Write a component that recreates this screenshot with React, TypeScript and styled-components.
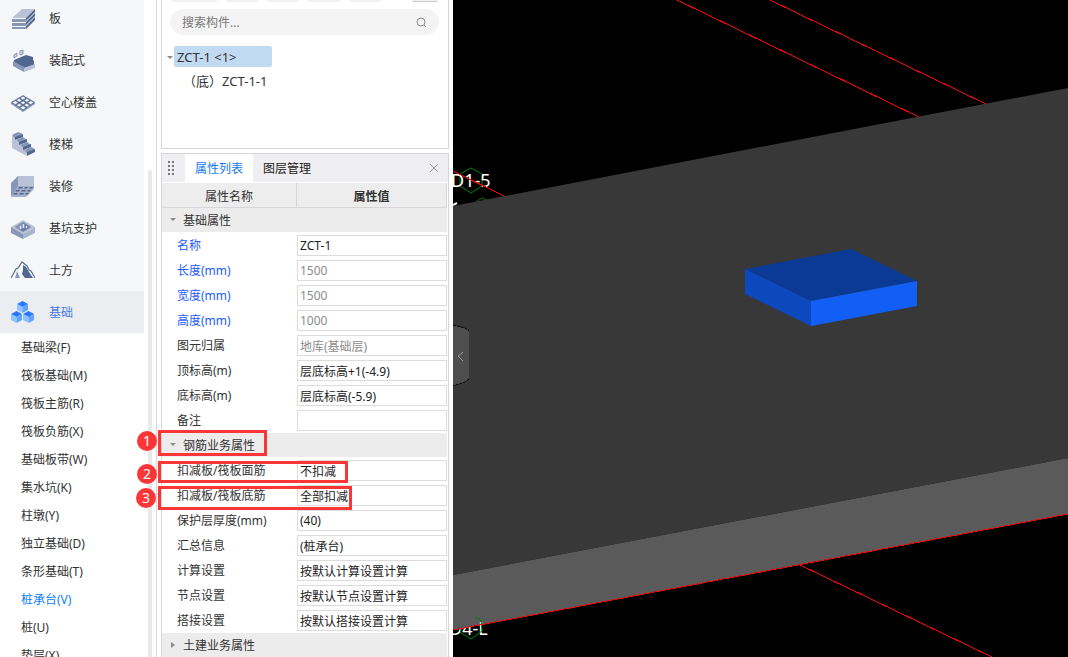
import React from "react";
import styled, { createGlobalStyle, css } from "styled-components";

const GlobalStyle = createGlobalStyle`
  *, *::before, *::after { box-sizing: border-box; }
  html, body, #root { height: 100%; }
  body {
    margin: 0;
    overflow: hidden;
    background: #fff;
    color: #333;
    font: 12px/20px "Noto Sans", "Noto Sans CJK SC", sans-serif;
  }
  button, input { font: inherit; color: inherit; }
  button { border: 0; padding: 0; background: none; cursor: pointer; }
`;

const Page = styled.div`
  display: flex;
  height: 100vh;
  overflow: hidden;
`;

/* Module navigation */

const Sidebar = styled.nav`
  flex: 0 0 144px;
  margin-top: -3px;
  background: #f5f7f9;
`;

const ModuleButton = styled.button<{ $active?: boolean }>`
  display: flex;
  align-items: center;
  gap: 14px;
  width: 100%;
  height: 42px;
  padding-left: 11px;
  background: ${(p) => (p.$active ? "#ebedf1" : "transparent")};
  color: ${(p) => (p.$active ? "#4a7bdf" : "#333")};
`;

const ModuleLabel = styled.span`
  padding-top: 2px;
`;

const SubList = styled.div`
  padding-top: 1px;
  background: #fff;
`;

const SubButton = styled.button<{ $active?: boolean }>`
  display: block;
  width: 100%;
  height: 28px;
  padding-left: 21px;
  text-align: left;
  color: ${(p) => (p.$active ? "#0a80ff" : "#333")};
`;

const Gutter = styled.div`
  flex: 0 0 13px;
  padding: 170px 0 0 4px;
  border-right: 1px solid #d9d9dc;
`;

const ScrollThumb = styled.div`
  width: 4px;
  height: 100%;
  border-radius: 2px 2px 0 0;
  background: #e9e9e9;
`;

/* Component list and properties */

const Inspector = styled.main`
  display: flex;
  flex: 0 0 296px;
  flex-direction: column;
  gap: 4px;
  padding: 0 4px;
`;

const TreePanel = styled.section`
  flex: 0 0 149px;
  border: solid #d6d6d8;
  border-width: 0 1px 1px;
`;

const Toolbar = styled.div`
  display: flex;
  gap: 9px;
  height: 2px;
  padding: 0 10px;
`;

const ToolButton = styled.button<{ $width: number; $last?: boolean }>`
  width: ${(p) => p.$width}px;
  height: 2px;
  border-radius: 0 0 3px 3px;
  background: #f1f1f1;
  ${(p) =>
    p.$last &&
    css`
      margin-left: auto;
      border-bottom: 1px solid #ccc;
    `}
`;

const SearchBox = styled.label`
  display: flex;
  align-items: center;
  height: 26px;
  margin: 7px 9px 0 8px;
  padding: 0 12px;
  border-radius: 13px;
  background: #f4f4f4;
`;

const SearchInput = styled.input`
  flex: 1;
  min-width: 0;
  padding: 2px 0 0;
  border: 0;
  outline: 0;
  background: transparent;
  &::placeholder { color: #777; opacity: 1; }
`;

const Tree = styled.div`
  display: flex;
  flex-direction: column;
  align-items: flex-start;
  padding: 11px 0 0 5px;
  font-size: 13px;
`;

const TreeRow = styled.div`
  display: flex;
  align-items: center;
`;

const TreeToggle = styled.button`
  display: flex;
  width: 7px;
`;

const TreeItem = styled.button<{ $selected?: boolean }>`
  height: 21px;
  text-align: left;
  ${(p) =>
    p.$selected
      ? css`
          width: 98px;
          padding-left: 3px;
          border-radius: 2px;
          background: #c2d9f2;
        `
      : css`
          margin: 3px 0 0 16px;
        `}
`;

const PropertyPanel = styled.section`
  position: relative;
  flex: 1;
  min-height: 0;
  border: solid #d6d6d8;
  border-width: 1px 1px 0;
`;

const TabBar = styled.div`
  display: flex;
  height: 29px;
  border-bottom: 1px solid #fff;
  background: #efeff1;
`;

const Grip = styled.span`
  display: flex;
  align-items: center;
  width: 23px;
  padding-left: 5px;
`;

const Tab = styled.button<{ $active?: boolean }>`
  width: 68px;
  padding-top: 2px;
  background: ${(p) => (p.$active ? "#fff" : "transparent")};
  color: ${(p) => (p.$active ? "#1478f0" : "#222")};
`;

const CloseButton = styled.button`
  display: flex;
  align-items: center;
  margin-left: auto;
  padding-right: 9px;
`;

const PropertyTable = styled.table`
  width: calc(100% - 1px);
  border-collapse: separate;
  border-spacing: 0;
  table-layout: fixed;
  text-align: left;
`;

const HeadCell = styled.th<{ $bold?: boolean }>`
  height: 25px;
  padding: 3px 0 0;
  border: solid #d6d6d8;
  border-width: 0 1px 1px 0;
  background: #ededed;
  text-align: center;
  font-weight: ${(p) => (p.$bold ? 700 : 400)};
`;

const NameHeadCell = styled(HeadCell)`
  width: 135px;
`;

const SectionCell = styled.th`
  height: 25px;
  padding: 2px 0 0;
  border-bottom: 1px solid #fff;
  background: #ececec;
  font-weight: 400;
`;

const SectionButton = styled.button`
  display: flex;
  align-items: center;
  gap: 6px;
  padding-left: 8px;
`;

const NameCell = styled.th<{ $blue?: boolean }>`
  height: 25px;
  padding: 0 0 0 15px;
  font-weight: 400;
  white-space: nowrap;
  color: ${(p) => (p.$blue ? "#1a5cff" : "#333")};
`;

const ValueCell = styled.td`
  height: 25px;
  padding: 0;
`;

const ValueInput = styled.input<{ $muted?: boolean }>`
  display: block;
  width: 100%;
  height: 21px;
  padding: 0 2px;
  border: 1px solid #dcdcdc;
  outline: 0;
  background: #fff;
  color: ${(p) => (p.$muted ? "#8c8c8c" : "#222")};
`;

/* Numbered callouts laid over the property rows */

const Callout = styled.div<{ $top: number; $left: number; $width: number; $height: number }>`
  position: absolute;
  top: ${(p) => p.$top}px;
  left: ${(p) => p.$left}px;
  width: ${(p) => p.$width}px;
  height: ${(p) => p.$height}px;
  border: 3px solid #fb3636;
  pointer-events: none;
`;

const Badge = styled.span<{ $top: number; $left: number }>`
  position: absolute;
  top: ${(p) => p.$top}px;
  left: ${(p) => p.$left}px;
  width: 20px;
  height: 20px;
  border-radius: 50%;
  background: #fb3636;
  color: #fff;
  font-size: 14px;
  text-align: center;
`;

/* Model view */

const Viewport = styled.section`
  position: relative;
  flex: 1;
  min-width: 0;
  background: #000;
`;

const Scene = styled.svg`
  display: block;
  width: 100%;
  height: 100%;
`;

const CollapseButton = styled.button`
  position: absolute;
  top: 324px;
  left: 0;
  display: flex;
  width: 17px;
  height: 63px;
`;

const Icon = ({ children }: { children: React.ReactNode }) => (
  <svg width="24" height="24" viewBox="0 0 24 24" aria-hidden="true">{children}</svg>
);

const icons = {
  slab: (
    <Icon>
      <path d="M1 12 11 3H24L15 12Z" fill="#b9c2d6" />
      <path d="M1 13H15V16H1ZM1 17H15V20H1ZM1 21H15V23H1Z" fill="#8797b8" />
      <path d="M15 12 24 3V6L15 15ZM15 16 24 7V10L15 19ZM15 20 24 11V14L15 23Z" fill="#52678f" />
    </Icon>
  ),
  prefab: (
    <Icon>
      <path d="M3 7 6 5V8L3 10ZM9 3 12 2V6L9 7Z" fill="#c9d0df" stroke="#8797b8" />
      <path d="M3 12 15 7 22 9V12L23 13V17L13 20 3 16Z" fill="#52678f" />
      <path d="M2 13 13 19V24L2 18Z" fill="#8797b8" />
      <path d="M13 20 24 16V20L13 24Z" fill="#b9c2d6" />
    </Icon>
  ),
  hollow: (
    <Icon>
      <path d="M0 12 12 5 24 12V14L12 22 0 14Z" fill="#8797b8" />
      <path d="M1 12.500 12 6 23 12.500 12 20Z" fill="#f5f7f9" stroke="#60739a" />
      <path d="M4.700 10.300 15.700 17.500M8.300 8.200 19.300 15M15.700 8.200 4.700 15M19.300 10.300 8.300 17.500" stroke="#60739a" strokeWidth="1.500" />
    </Icon>
  ),
  stair: (
    <Icon>
      <path d="M1 3 4 5V8L9 10V13L14 15V18L16 20V24L1 16Z" fill="#b9c2d6" />
      <path d="M1 3 7 0 12 2 4 6ZM5 8 12 5 16 8 9 11ZM9 13 16 10 20 13 13 16ZM13 18 20 15 24 17 16 21Z" fill="#8797b8" />
      <path d="M4 5 12 2V5L4 8ZM8 10 16 7V10L8 13ZM12 15 20 12V15L12 18ZM16 20 24 17V20L16 24Z" fill="#52678f" />
    </Icon>
  ),
  finish: (
    <Icon>
      <path d="M0 9 7 2V13L0 23Z" fill="#8797b8" />
      <path d="M7 2H23V12H7Z" fill="#b9c2d6" />
      <path d="M7 12H23V15L15 23H0Z" fill="#a4b0ca" />
      <path d="M8 13H12L11 14.500H7ZM14 13H17L16 14.500H13ZM19 13H22L21 14.500H18ZM5 16H9L8 17.500H4ZM11 16H15L14 17.500H10ZM17 16H20L19 17.500H16ZM3 19H7L6 20.500H2ZM9 19H13L12 20.500H8ZM15 19H18L17 20.500H14Z" fill="#52678f" />
    </Icon>
  ),
  pit: (
    <Icon>
      <path d="M0 11 12 4 24 11 12 18Z" fill="#b9c2d6" />
      <path d="M4 11 12 6 20 11 12 16Z" fill="#6d7fa5" />
      <path d="M4 11 12 6V12L8 14Z" fill="#8797b8" />
      <path d="M9.500 10V13M12.500 8V12M15.500 10V12" stroke="#dfe4ed" strokeWidth="1.500" />
      <path d="M0 11 12 18V23L0 17Z" fill="#8797b8" />
      <path d="M12 18 24 11V17L12 23Z" fill="#a9b5cd" />
    </Icon>
  ),
  earth: (
    <Icon>
      <path d="M0 20 5 11 7 10 11 4 16 8 18 12 20 13 24 20" fill="none" stroke="#60739a" strokeWidth="1.3" />
      <path d="M11 5 13 12 16 15 18 20H9L11 14 9 11Z" fill="#f5f7f9" />
      <path d="M12 7 15 9 18 14 22 20H14L11 16 12 12Z" fill="#52678f" />
      <path d="M6 13 9 20H4L5 17Z" fill="#8797b8" />
    </Icon>
  ),
  foundation: (
    <Icon>
      {[[6, 1], [0, 11], [12, 11]].map(([x, y]) => (
        <g key={x} transform={`translate(${x} ${y})`}>
          <path d="M0 3 5.500 0 11 3 5.500 6Z" fill="#2878ff" />
          <path d="M0 3 5.500 6V12L0 9Z" fill="#8fc2ff" />
          <path d="M5.500 6 11 3V9L5.500 12Z" fill="#5ea3ff" />
        </g>
      ))}
    </Icon>
  ),
};

const modules: { label: string; icon: React.ReactNode; active?: boolean }[] = [
  { label: "板", icon: icons.slab },
  { label: "装配式", icon: icons.prefab },
  { label: "空心楼盖", icon: icons.hollow },
  { label: "楼梯", icon: icons.stair },
  { label: "装修", icon: icons.finish },
  { label: "基坑支护", icon: icons.pit },
  { label: "土方", icon: icons.earth },
  { label: "基础", icon: icons.foundation, active: true },
];

const subItems = [
  "基础梁(F)", "筏板基础(M)", "筏板主筋(R)", "筏板负筋(X)", "基础板带(W)", "集水坑(K)",
  "柱墩(Y)", "独立基础(D)", "条形基础(T)", "桩承台(V)", "桩(U)", "垫层(X)",
];

type Property = { name: string; value: string; blue?: boolean; muted?: boolean };

const basicProps: Property[] = [
  { name: "名称", value: "ZCT-1", blue: true },
  { name: "长度(mm)", value: "1500", blue: true, muted: true },
  { name: "宽度(mm)", value: "1500", blue: true, muted: true },
  { name: "高度(mm)", value: "1000", blue: true, muted: true },
  { name: "图元归属", value: "地库(基础层)", muted: true },
  { name: "顶标高(m)", value: "层底标高+1(-4.9)" },
  { name: "底标高(m)", value: "层底标高(-5.9)" },
  { name: "备注", value: "" },
];

const rebarProps: Property[] = [
  { name: "扣减板/筏板面筋", value: "不扣减" },
  { name: "扣减板/筏板底筋", value: "全部扣减" },
  { name: "保护层厚度(mm)", value: "(40)" },
  { name: "汇总信息", value: "(桩承台)" },
  { name: "计算设置", value: "按默认计算设置计算" },
  { name: "节点设置", value: "按默认节点设置计算" },
  { name: "搭接设置", value: "按默认搭接设置计算" },
];

const Section = ({ title, open }: { title: string; open?: boolean }) => (
  <tr>
    <SectionCell colSpan={2} scope="colgroup">
      <SectionButton aria-expanded={!!open}>
        <svg width="7" height="10" viewBox="0 0 7 10" aria-hidden="true">
          <path d={open ? "M0 2H6L3 5Z" : "M1 1 5 4 1 7Z"} fill="#8a8a8a" />
        </svg>
        {title}
      </SectionButton>
    </SectionCell>
  </tr>
);

const PropertyRow = ({ name, value, blue, muted }: Property) => (
  <tr>
    <NameCell scope="row" $blue={blue}>
      <label htmlFor={name}>{name}</label>
    </NameCell>
    <ValueCell>
      <ValueInput id={name} defaultValue={value} $muted={muted} />
    </ValueCell>
  </tr>
);

const AxisText = styled.text`
  font: 18px "Noto Sans", sans-serif;
  fill: #fff;
`;

export default function App() {
  return (
    <>
      <GlobalStyle />
      <Page>
        <Sidebar>
          {modules.map((m) => (
            <ModuleButton key={m.label} $active={m.active}>
              {m.icon}
              <ModuleLabel>{m.label}</ModuleLabel>
            </ModuleButton>
          ))}
          <SubList>
            {subItems.map((s) => (
              <SubButton key={s} $active={s === "桩承台(V)"}>{s}</SubButton>
            ))}
          </SubList>
        </Sidebar>
        <Gutter><ScrollThumb /></Gutter>

        <Inspector>
          <TreePanel>
            <Toolbar>
              <ToolButton $width={45} aria-label="新建" />
              <ToolButton $width={32} aria-label="复制" />
              <ToolButton $width={32} aria-label="删除" />
              <ToolButton $width={32} aria-label="层间复制" />
              <ToolButton $width={32} aria-label="存档" />
              <ToolButton $width={26} $last aria-label="更多" />
            </Toolbar>
            <SearchBox>
              <SearchInput placeholder="搜索构件..." aria-label="搜索构件" />
              <svg width="11" height="11" viewBox="0 0 11 11" fill="none" stroke="#8c8c8c" aria-hidden="true">
                <circle cx="5" cy="5" r="4" />
                <path d="m8 8 2 2" />
              </svg>
            </SearchBox>
            <Tree>
              <TreeRow>
                <TreeToggle aria-label="折叠">
                  <svg width="7" height="6" viewBox="0 0 7 6"><path d="M0 2H6L3 5Z" fill="#888" /></svg>
                </TreeToggle>
                <TreeItem $selected>ZCT-1 &lt;1&gt;</TreeItem>
              </TreeRow>
              <TreeItem>（底）ZCT-1-1</TreeItem>
            </Tree>
          </TreePanel>

          <PropertyPanel>
            <TabBar>
              <Grip>
                <svg width="8" height="16" viewBox="0 0 8 16" fill="#777" aria-hidden="true">
                  {[1, 5, 9, 13].map((y) => (
                    <path key={y} d={`M1 ${y}h2v2h-2zM5 ${y}h2v2h-2z`} />
                  ))}
                </svg>
              </Grip>
              <Tab $active>属性列表</Tab>
              <Tab>图层管理</Tab>
              <CloseButton aria-label="关闭">
                <svg width="10" height="10" viewBox="0 0 10 10" stroke="#999"><path d="m1 1 8 8M9 1 1 9" /></svg>
              </CloseButton>
            </TabBar>
            <PropertyTable>
              <thead>
                <tr>
                  <NameHeadCell>属性名称</NameHeadCell>
                  <HeadCell $bold>属性值</HeadCell>
                </tr>
              </thead>
              <tbody>
                <Section title="基础属性" open />
                {basicProps.map((p) => <PropertyRow key={p.name} {...p} />)}
                <Section title="钢筋业务属性" open />
                {rebarProps.map((p) => <PropertyRow key={p.name} {...p} />)}
                <Section title="土建业务属性" />
              </tbody>
            </PropertyTable>
            <Callout $top={276} $left={-4} $width={109} $height={26} />
            <Callout $top={307} $left={-4} $width={190} $height={22} />
            <Callout $top={332} $left={-4} $width={194} $height={24} />
            <Badge $top={277} $left={-25}>1</Badge>
            <Badge $top={310} $left={-25}>2</Badge>
            <Badge $top={334} $left={-26}>3</Badge>
          </PropertyPanel>
        </Inspector>

        <Viewport>
          <Scene viewBox="0 0 615 657" preserveAspectRatio="xMinYMin slice" role="img" aria-label="三维视图">
            <g fill="none" stroke="#f00" shapeRendering="crispEdges">
              <path d="M224 0 466 117M317 0 533 104M347 565 539 657" />
            </g>
            <path d="M18 168 29 174V186L18 193 7 186V174ZM20 204 29 198 38 202V210H20Z" fill="none" stroke="#008000" />
            <AxisText x="-2" y="187">D1-5</AxisText>
            <path d="M0 171 51 196" stroke="#f00" shapeRendering="crispEdges" />
            <path d="M0 205 4 203" stroke="#fff" strokeWidth="2" />
            <path d="M0 206 615 88V458L0 575Z" fill="#383838" />
            <path d="M0 575 615 458V514L0 630Z" fill="#5a5a5a" />
            <AxisText x="-4" y="635">D4-L</AxisText>
            <path d="M0 616H26V625L0 630Z" fill="#5a5a5a" />
            <path d="M22 617 28 620 29 631 18 639 8 633 7 629" fill="none" stroke="#008000" />
            <path d="M0 630 615 514" stroke="#f00" shapeRendering="crispEdges" />
            <path d="M292 269 398 249 464 281 358 301Z" fill="#0b3a96" />
            <path d="M292 269 358 301V326L292 294Z" fill="#0d48bf" />
            <path d="M358 301 464 281V306L358 326Z" fill="#125ff5" />
          </Scene>
          <CollapseButton aria-label="收起面板">
            <svg width="17" height="63" viewBox="0 0 17 63">
              <path d="M0 1 12 4 16 7V55L12 58 0 62Z" fill="#4e4e4e" />
              <path d="M0 1 12 4 16 7M16 55 12 58 0 62" fill="none" stroke="#000" strokeDasharray="3 1" />
              <path d="M10 28 5 32 10 37" fill="none" stroke="#999" />
            </svg>
          </CollapseButton>
        </Viewport>
      </Page>
    </>
  );
}
